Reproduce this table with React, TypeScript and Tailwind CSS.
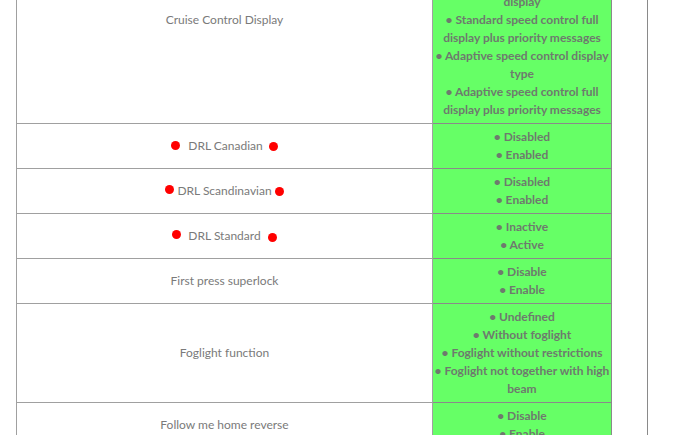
import React from "react";

type Row = { label: React.ReactNode; lines: string[] };

const Dot = ({ y }: { y: string }) => (
  <span className={`inline-block w-[9px] h-[9px] rounded-full bg-[#ff0000] relative ${y}`} />
);

const rows: Row[] = [
  {
    label: "Cruise Control Display",
    lines: [
      "• Undefined",
      "• Without display",
      "• No speed control display",
      "• Standard speed control limited",
      "display",
      "• Standard speed control full",
      "display plus priority messages",
      "• Adaptive speed control display",
      "type",
      "• Adaptive speed control full",
      "display plus priority messages",
    ],
  },
  {
    label: (
      <span>
        <Dot y="top-[0px]" />
        <span className="ml-[8px] mr-[6px]">DRL Canadian</span>
        <Dot y="top-[1px]" />
      </span>
    ),
    lines: ["• Disabled", "• Enabled"],
  },
  {
    label: (
      <span>
        <Dot y="-top-[1px]" />
        <span className="mx-[3px]">DRL Scandinavian</span>
        <Dot y="top-[1px]" />
      </span>
    ),
    lines: ["• Disabled", "• Enabled"],
  },
  {
    label: (
      <span>
        <Dot y="-top-[1px]" />
        <span className="mx-[7px]">DRL Standard</span>
        <Dot y="top-[2px]" />
      </span>
    ),
    lines: ["• Inactive", "• Active"],
  },
  { label: "First press superlock", lines: ["• Disable", "• Enable"] },
  {
    label: "Foglight function",
    lines: [
      "• Undefined",
      "• Without foglight",
      "• Foglight without restrictions",
      "• Foglight not together with high",
      "beam",
    ],
  },
  { label: "Follow me home reverse", lines: ["• Disable", "• Enable"] },
];

export default function App() {
  return (
    <div
      className="w-[700px] h-[435px] overflow-hidden bg-white"
      style={{ fontFamily: "Lato, 'Liberation Sans', sans-serif" }}
    >
      <div className="flow-root w-[648px] h-[435px] border-r border-[#8a8a8a] pl-[16px]">
        <table className="-mt-[84px] border-collapse table-fixed w-[595px]">
          <colgroup>
            <col className="w-[416px]" />
            <col className="w-[179px]" />
          </colgroup>
          <tbody>
            {rows.map((r, i) => (
              <tr key={i}>
                <td className="border border-[#a0a0a0] text-center align-middle text-[12px] leading-[18px] py-[4px] text-[#7a7a7a]">
                  {r.label}
                </td>
                <td className="border border-[#8a8a8a] bg-[#66ff66] text-center align-middle text-[12px] leading-[18px] py-[4px] font-bold text-[#6e7a6e]">
                  {r.lines.map((l, j) => (
                    <div key={j} className="whitespace-nowrap">
                      {l}
                    </div>
                  ))}
                </td>
              </tr>
            ))}
          </tbody>
        </table>
      </div>
    </div>
  );
}
